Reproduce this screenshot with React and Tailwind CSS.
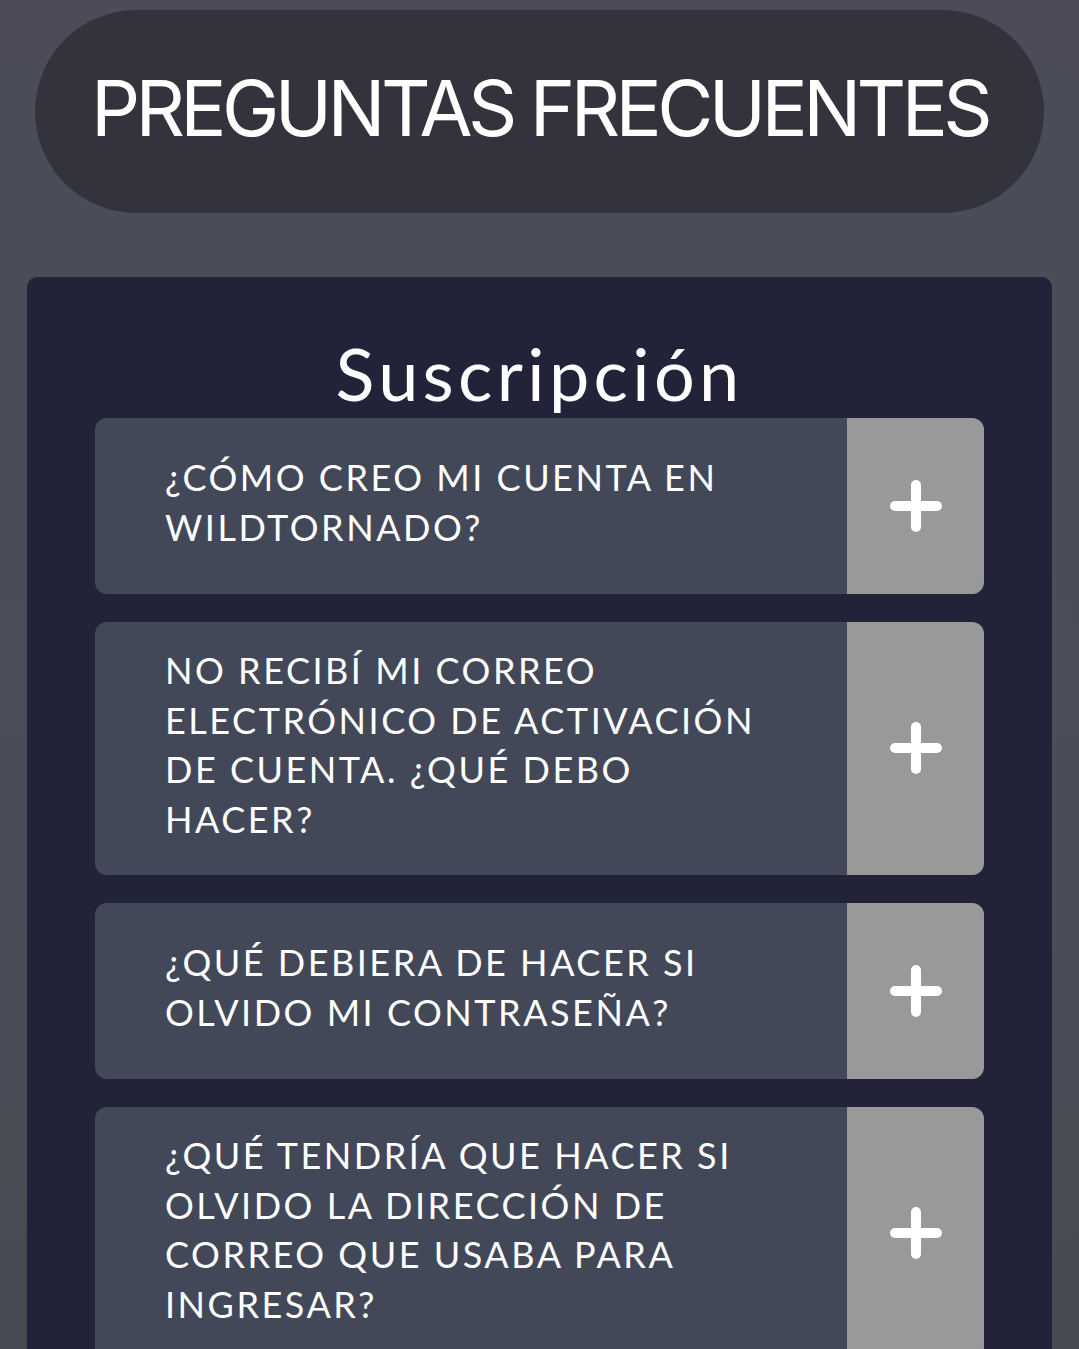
import React from 'react';

const faqs = [
  ['¿CÓMO CREO MI CUENTA EN', 'WILDTORNADO?'],
  ['NO RECIBÍ MI CORREO', 'ELECTRÓNICO DE ACTIVACIÓN', 'DE CUENTA. ¿QUÉ DEBO', 'HACER?'],
  ['¿QUÉ DEBIERA DE HACER SI', 'OLVIDO MI CONTRASEÑA?'],
  ['¿QUÉ TENDRÍA QUE HACER SI', 'OLVIDO LA DIRECCIÓN DE', 'CORREO QUE USABA PARA', 'INGRESAR?'],
];

const PlusIcon = () => (
  <svg width="52" height="52" viewBox="0 0 52 52" fill="none">
    <path d="M26 5v42M5 26h42" stroke="white" strokeWidth="10" strokeLinecap="round" />
  </svg>
);

const FaqItem = ({ lines }) => (
  <div className="flex rounded-[12px] overflow-hidden bg-[#434859]">
    <div className="flex-1 min-h-[176px] flex items-center pl-[70px] pr-[30px] pt-[24px] pb-[30px]">
      <p className="text-[36px] leading-[49.7px] text-white tracking-[0.07em] font-['Lato',sans-serif]">
        {lines.map((l, i) => (
          <span key={i} className="block whitespace-nowrap">{l}</span>
        ))}
      </p>
    </div>
    <button className="w-[137px] shrink-0 bg-[#999999] flex items-center justify-center">
      <PlusIcon />
    </button>
  </div>
);

export default function App() {
  return (
    <div className="min-h-[1349px] bg-gradient-to-b from-[#4b4c58] via-[#4a4d5a] to-[#454b52] pt-[10px] px-[27px]">
      <div className="mx-[8px] h-[203px] rounded-full bg-[#33333d] flex items-center justify-center pb-[6px]">
        <h1 className="text-[77px] leading-none text-white font-normal tracking-[-0.06em] font-['Inter',sans-serif]">
          PREGUNTAS FRECUENTES
        </h1>
      </div>
      <div className="mt-[64px] rounded-[10px] bg-[#222339] px-[68px] pt-[61px] pb-[60px]">
        <h2 className="text-center text-white text-[72px] leading-[70px] mb-[10px] tracking-[0.06em] font-['Lato',sans-serif]">
          Suscripción
        </h2>
        <div className="flex flex-col gap-[28px]">
          {faqs.map((f, i) => (
            <FaqItem key={i} lines={f} />
          ))}
        </div>
      </div>
    </div>
  );
}
